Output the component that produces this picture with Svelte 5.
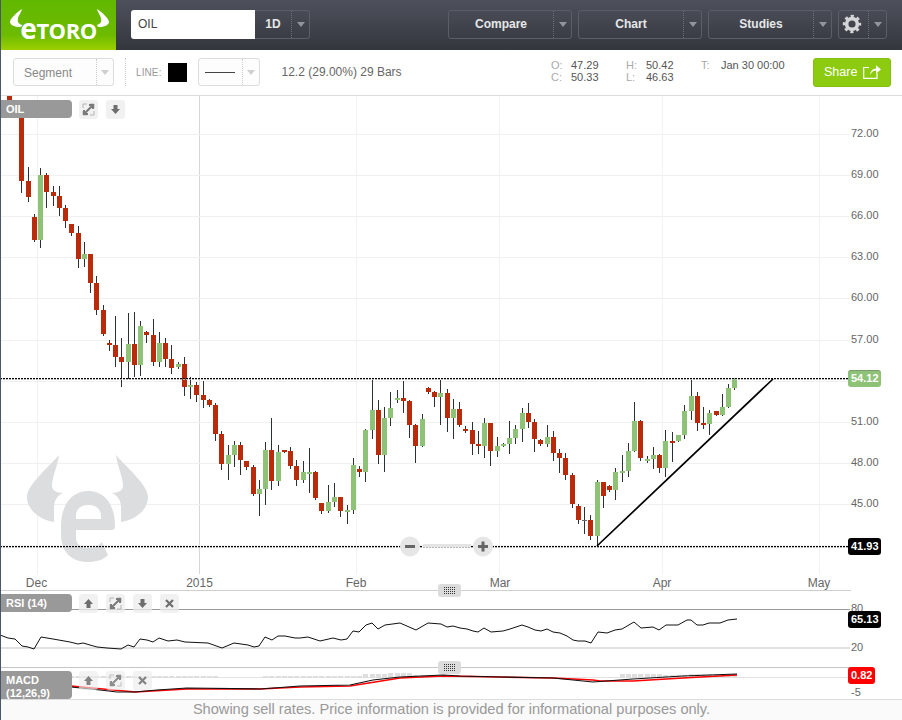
<script lang="ts">
  // [x, high, low, bodyTop, bodyBottom, kind]
  const candles: [number, number, number, number, number, string][] = [
    [9, 90, 112, 90, 112, "r"], [21, 100, 193, 100, 181, "r"], [28, 167, 202, 181, 197, "r"], [34, 214, 242, 217, 240, "r"],
    [40, 168, 248, 175, 240, "g"], [46, 173, 208, 175, 192, "r"], [53, 186, 206, 192, 196, "r"], [59, 186, 216, 196, 208, "r"],
    [65, 205, 228, 208, 221, "r"], [71, 224, 236, 224, 233, "r"], [78, 226, 268, 233, 259, "r"], [84, 242, 267, 254, 259, "g"],
    [90, 254, 293, 254, 283, "r"], [96, 276, 315, 283, 310, "r"], [103, 305, 336, 310, 334, "r"], [109, 340, 351, 343, 345, "r"],
    [115, 316, 367, 345, 357, "r"], [121, 338, 387, 357, 362, "r"], [128, 313, 379, 344, 362, "g"], [134, 312, 377, 344, 365, "r"],
    [140, 321, 376, 326, 365, "g"], [146, 331, 343, 332, 335, "r"], [153, 319, 366, 335, 362, "r"], [159, 332, 367, 343, 362, "g"],
    [165, 338, 367, 343, 359, "r"], [171, 345, 374, 359, 368, "r"], [178, 362, 369, 364, 367, "g"], [184, 357, 396, 364, 387, "r"],
    [190, 377, 399, 385, 387, "g"], [196, 382, 402, 385, 395, "r"], [203, 381, 408, 395, 400, "r"], [209, 399, 407, 400, 405, "r"],
    [215, 403, 441, 405, 434, "r"], [221, 431, 470, 434, 464, "r"], [228, 445, 480, 455, 464, "g"], [234, 441, 467, 445, 455, "g"],
    [240, 442, 475, 445, 460, "r"], [246, 461, 470, 461, 467, "r"], [253, 465, 496, 467, 494, "r"], [259, 480, 516, 489, 494, "g"],
    [265, 442, 505, 450, 489, "g"], [271, 418, 490, 450, 481, "r"], [278, 445, 486, 452, 481, "g"], [284, 450, 453, 450, 452, "r"],
    [290, 447, 469, 451, 466, "r"], [296, 460, 486, 466, 480, "r"], [303, 461, 483, 472, 480, "g"], [309, 448, 493, 472, 474, "g"],
    [315, 471, 500, 472, 498, "r"], [321, 503, 514, 503, 511, "r"], [328, 485, 513, 502, 511, "g"], [334, 483, 507, 497, 502, "g"],
    [340, 497, 517, 497, 511, "r"], [347, 505, 524, 510, 512, "g"], [353, 458, 514, 465, 510, "g"], [359, 466, 477, 469, 472, "r"],
    [365, 429, 482, 430, 472, "g"], [372, 378, 439, 410, 430, "g"], [378, 400, 464, 410, 455, "r"], [384, 407, 472, 418, 455, "g"],
    [390, 392, 426, 408, 418, "g"], [397, 390, 403, 398, 400, "g"], [403, 381, 413, 398, 401, "r"], [409, 400, 438, 401, 425, "r"],
    [415, 424, 463, 425, 446, "r"], [422, 414, 447, 419, 446, "g"], [428, 387, 394, 388, 392, "r"], [434, 391, 407, 392, 397, "r"],
    [440, 380, 425, 393, 397, "g"], [447, 389, 432, 393, 418, "r"], [453, 399, 439, 409, 418, "g"], [459, 402, 427, 409, 425, "r"],
    [465, 426, 433, 429, 431, "r"], [472, 422, 455, 430, 444, "r"], [478, 431, 454, 444, 446, "r"], [484, 418, 458, 423, 446, "g"],
    [490, 423, 466, 423, 451, "r"], [497, 437, 457, 446, 451, "g"], [503, 443, 447, 444, 446, "g"], [509, 421, 454, 438, 444, "g"],
    [515, 425, 444, 429, 438, "g"], [522, 408, 442, 413, 429, "g"], [528, 403, 428, 413, 422, "r"], [534, 419, 452, 422, 439, "r"],
    [540, 439, 446, 440, 444, "r"], [547, 425, 447, 437, 444, "g"], [553, 431, 461, 437, 453, "r"], [559, 449, 473, 453, 458, "r"],
    [565, 453, 480, 458, 475, "r"], [572, 473, 508, 475, 504, "r"], [578, 504, 524, 506, 520, "r"], [584, 507, 534, 520, 521, "n"],
    [590, 515, 540, 520, 536, "r"], [597, 480, 546, 482, 536, "g"], [603, 482, 508, 482, 496, "r"], [609, 485, 492, 486, 490, "r"],
    [615, 468, 500, 472, 490, "g"], [622, 455, 482, 471, 473, "g"], [628, 443, 477, 451, 471, "g"], [634, 402, 452, 421, 451, "g"],
    [640, 420, 461, 421, 458, "r"], [647, 456, 463, 459, 461, "g"], [653, 447, 469, 455, 459, "g"], [659, 454, 473, 455, 468, "r"],
    [665, 430, 477, 441, 468, "g"], [672, 432, 462, 441, 443, "r"], [678, 435, 442, 435, 441, "g"], [684, 405, 439, 411, 435, "g"],
    [691, 379, 420, 396, 411, "g"], [697, 392, 431, 396, 423, "r"], [703, 407, 429, 423, 425, "r"], [709, 410, 435, 413, 424, "g"],
    [716, 411, 416, 411, 415, "r"], [722, 394, 416, 407, 415, "g"], [728, 384, 408, 388, 407, "g"], [734, 378, 390, 378, 388, "g"],
  ];

  const hLines = [134, 175, 216, 257, 298, 340, 381, 422, 463, 504, 545];
  const priceLabels = [
    ["72.00", 137], ["69.00", 178], ["66.00", 219], ["63.00", 260], ["60.00", 301], ["57.00", 343],
    ["51.00", 425], ["48.00", 466], ["45.00", 507],
  ];
  const vLines = [37, 356, 499, 662, 819];
  const months = [["Dec", 36.5], ["2015", 199.5], ["Feb", 356], ["Mar", 500], ["Apr", 662], ["May", 819]];

  const rsi = "0,635 8,638 15,639 22,646 28,647 34,649 41,637 53,639 70,642 78,644 83,643 97,647 107,648 121,649 128,645 134,647 140,639 147,640 153,642 159,638 168,641 177,640 185,642 208,643 222,648 234,643 248,645 254,647 259,646 265,637 272,640 278,636 285,636 295,638 300,638 308,637 320,641 333,638 341,640 347,639 353,631 359,632 366,625 372,623 378,629 385,625 400,623 416,630 428,623 441,624 447,627 453,626 460,628 467,629 473,631 478,632 484,628 491,632 503,631 510,629 522,625 528,627 535,630 541,631 547,629 553,632 560,633 567,636 573,640 578,641 585,641 591,643 598,632 607,633 615,630 622,629 634,622 641,628 653,627 659,630 666,625 678,625 687,620 691,620 697,625 703,625 709,623 720,623 728,620 737,619";
  const macd = "0,684 71,687 100,690 117,692 135,692 157,690 187,688 260,689 287,687 300,686 350,685 373,680 400,677 443,675 460,676 500,677 553,678 593,682 633,679 683,676 737,674";
  const signal = "0,683 71,686 135,692 187,689 260,689 300,687 350,686 400,678 443,676 500,677 553,678 593,680 600,681 633,681 683,678 737,675";

  // histogram sits on the zero line, taller around the Feb bulge
  function histHeight(x: number): number {
    if (x > 217 && x < 263) return 0;
    if (x > 362 && x < 410) return x > 384 ? 4 : 3;
    if (x > 410 && x < 437) return 2;
    if (x > 437 && x < 620) return 0;
    if (x > 620) return x < 660 || x > 690 ? 3 : 2;
    return 1;
  }
  const hist = candles.filter((c) => c[0] > 70).map((c) => ({ x: c[0], h: histHeight(c[0]) })).filter((b) => b.h > 0);
</script>

<div class="page">
  <header class="topbar">
    <div class="logo">
      <svg class="horns" viewBox="0 0 115 50" aria-hidden="true">
        <path d="M21 9C15 13 9 19 9 22C9 25 14 27 19 27C20 27 21 26 21 25C18 24 16 22 17 19C17 16 20 13 21 9Z" />
        <path d="M96 9C102 13 108 19 108 22C108 25 103 27 98 27C97 27 96 26 96 25C99 24 101 22 100 19C100 16 97 13 96 9Z" />
      </svg>
      <span class="wordmark"><span class="e">e</span>TORO</span>
    </div>

    <div class="symbol">
      <span class="symbol-input">OIL</span>
      <div class="period">
        <span class="ctl-label">1D</span>
        <span class="caret-box"><i class="caret"></i></span>
      </div>
    </div>

    <div class="menus">
      {#each ["Compare", "Chart", "Studies"] as item}
        <div class="menu">
          <span class="ctl-label">{item}</span>
          <span class="caret-box"><i class="caret"></i></span>
        </div>
      {/each}
      <div class="menu gear-menu">
        <span class="ctl-label">
          <svg class="gear" viewBox="0 0 20 20" aria-hidden="true">
            <circle cx="10" cy="10" r="5.4" fill="none" stroke="#d4d5d8" stroke-width="3.6" />
            <circle cx="10" cy="10" r="7.9" fill="none" stroke="#d4d5d8" stroke-width="2.6" stroke-dasharray="3.1 3.1" stroke-dashoffset="1.5" />
          </svg>
        </span>
        <span class="caret-box"><i class="caret"></i></span>
      </div>
    </div>
  </header>

  <div class="toolbar">
    <div class="select segment">
      <span class="select-text">Segment</span>
      <span class="caret-box"><i class="caret light"></i></span>
    </div>
    <span class="sep"></span>
    <span class="line-label">LINE:</span>
    <span class="swatch"></span>
    <div class="select line-select">
      <span class="line-sample"></span>
      <span class="caret-box"><i class="caret light"></i></span>
    </div>
    <span class="measure">12.2 (29.00%) 29 Bars</span>

    <div class="ohlc">
      <span class="k">O:</span><span class="v">47.29</span>
      <span class="k">H:</span><span class="v">50.42</span>
      <span class="k">T:</span><span class="v">Jan 30 00:00</span>
      <span class="k">C:</span><span class="v">50.33</span>
      <span class="k">L:</span><span class="v">46.63</span>
    </div>

    <div class="share">
      Share
      <svg viewBox="0 0 18 14" aria-hidden="true">
        <path d="M6 2.5H0.7V13.3H14V8" fill="none" stroke="#fff" stroke-width="1.2" />
        <path d="M7 10C7.5 6 10 3.6 13 3.5V0.3L18 4.4L13 8.5V5.6C10.5 5.6 8.5 7 7 10Z" fill="#fff" />
      </svg>
    </div>
  </div>

  <section class="pane main-pane">
    <svg class="plot" viewBox="1 96 901 495">
      {#each vLines as x}
        <line x1={x + 0.5} x2={x + 0.5} y1="96" y2="574" stroke="#f2f2f2" />
      {/each}
      <line x1="199.5" x2="199.5" y1="96" y2="574" stroke="#d6d6d6" />
      {#each hLines as y}
        <line x1="0" x2="850" y1={y + 0.5} y2={y + 0.5} stroke="#f0f0f0" />
      {/each}

      <g fill="#dcddde">
        <path d="M59 455C48 468 27 485 27 497C27 510 40 520 54 522V507C54 500 58 495 63 493C56 493 52 490 52 486C52 477 58 465 59 455Z" />
        <path d="M116 455C127 468 148 485 148 497C148 510 135 520 121 522V507C121 500 117 495 112 493C119 493 123 490 123 486C123 477 117 465 116 455Z" />
        <path fill-rule="evenodd" d="M115 526C115 505 105 491 88 491C72 491 61 505 61 526V535C61 552 72 562 88 562C96 562 103 560 108 555L102 542C98 546 94 548 88 548C81 548 76 544 76 538V530H111C114 530 115 529 115 526ZM76 519V516C76 509 81 505 88 505C96 505 101 509 101 516V519Z" />
      </g>

      {#each candles as [x, hi, lo, top, bot, kind]}
        <rect x={x} y={hi} width="1" height={lo - hi} fill="#2a3033" />
        <rect class={kind} x={x - 2} y={top} width="5" height={bot - top} />
      {/each}

      {#each [378, 546] as y}
        <line x1="0" x2="848" y1={y + 1.5} y2={y + 1.5} class="dots-soft" />
        <line x1="0" x2="848" y1={y + 0.5} y2={y + 0.5} class="dots" />
      {/each}
      <line x1="597" y1="546" x2="773" y2="379" stroke="#000" stroke-width="1.7" />

      <g class="zoomer">
        <rect x="423" y="544" width="48" height="3" fill="#e4e4e4" />
        <circle cx="410" cy="546.5" r="10" fill="#e6e6e6" />
        <circle cx="483" cy="546.5" r="10" fill="#e6e6e6" />
        <rect x="405" y="545" width="10" height="3" fill="#666" />
        <rect x="478" y="545" width="10" height="3" fill="#666" />
        <rect x="481.5" y="541.5" width="3" height="10" fill="#666" />
      </g>

      {#each priceLabels as [text, y]}
        <text x="851" y={y} class="axis">{text}</text>
      {/each}
      {#each months as [text, x]}
        <text x={x} y="587" class="month">{text}</text>
      {/each}
      <line x1="0" x2="851" y1="590.5" y2="590.5" stroke="#cfcfcf" />
    </svg>

    <div class="pane-label oil">OIL</div>
    <div class="pane-tools oil-tools">
      <span class="tool"><svg viewBox="0 0 19 19"><use href="#ic-expand" /></svg></span>
      <span class="tool"><svg viewBox="0 0 19 19"><use href="#ic-down" /></svg></span>
    </div>
    <span class="tag green-tag tag-last">54.12</span>
    <span class="tag black-tag tag-low">41.93</span>
  </section>

  <section class="pane rsi-pane">
    <svg class="plot" viewBox="1 591 901 76">
      <line x1="0" x2="850" y1="609.5" y2="609.5" stroke="#999" />
      <line x1="0" x2="850" y1="648" y2="648" stroke="#e2e2e2" stroke-width="2" />
      <polyline points={rsi} fill="none" stroke="#111" />
      <text x="851" y="612" class="axis">80</text>
      <text x="851" y="651" class="axis">20</text>
    </svg>
    <div class="handle rsi-handle"></div>
    <div class="pane-label rsi-label">RSI (14)</div>
    <div class="pane-tools rsi-tools">
      <span class="tool"><svg viewBox="0 0 19 19"><use href="#ic-up" /></svg></span>
      <span class="tool"><svg viewBox="0 0 19 19"><use href="#ic-expand" /></svg></span>
      <span class="tool"><svg viewBox="0 0 19 19"><use href="#ic-down" /></svg></span>
      <span class="tool"><svg viewBox="0 0 19 19"><use href="#ic-close" /></svg></span>
    </div>
    <span class="tag black-tag tag-rsi">65.13</span>
  </section>

  <section class="pane macd-pane">
    <svg class="plot" viewBox="1 667 901 32">
      <line x1="0" x2="850" y1="667.5" y2="667.5" stroke="#c6c6c6" />
      <line x1="0" x2="850" y1="677.5" y2="677.5" stroke="#e2e2e2" />
      {#each hist as b}
        <rect x={b.x - 2} y={677 - b.h} width="5" height={b.h + 1} fill="#dedede" />
      {/each}
      <polyline points={signal} fill="none" stroke="#f00" stroke-width="1.5" />
      <polyline points={macd} fill="none" stroke="#111" stroke-width="1.2" />
      <text x="851" y="696" class="axis">-5</text>
    </svg>
    <div class="handle macd-handle"></div>
    <div class="pane-label macd-label">MACD<br />(12,26,9)</div>
    <div class="pane-tools macd-tools">
      <span class="tool"><svg viewBox="0 0 19 19"><use href="#ic-up" /></svg></span>
      <span class="tool"><svg viewBox="0 0 19 19"><use href="#ic-expand" /></svg></span>
      <span class="tool"><svg viewBox="0 0 19 19"><use href="#ic-close" /></svg></span>
    </div>
    <span class="tag red-tag tag-macd">0.82</span>
  </section>

  <footer class="disclaimer">Showing sell rates. Price information is provided for informational purposes only.</footer>

  <svg class="defs" aria-hidden="true">
    <defs>
      <g id="ic-expand">
        <path d="M4 8V4H8M11 4H15V8M15 11V15H11M8 15H4V11" fill="none" stroke="#b4b4b4" />
        <path d="M5 14L14 5M10 5H14V9M5 10V14H9" fill="none" stroke="#7a7a7a" stroke-width="2" />
      </g>
      <path id="ic-down" d="M7.5 5H11.5V9H14L9.5 14L5 9H7.5Z" fill="#6e6e6e" />
      <path id="ic-up" d="M7.5 14H11.5V10H14L9.5 5L5 10H7.5Z" fill="#6e6e6e" />
      <path id="ic-close" d="M6 6L13 13M13 6L6 13" stroke="#6e6e6e" stroke-width="2.2" fill="none" />
    </defs>
  </svg>
</div>

<style>
  :global(body) {
    margin: 0;
    background: #fff;
    overflow: hidden;
  }
  * {
    box-sizing: border-box;
  }
  .page {
    width: 902px;
    height: 720px;
    display: flex;
    flex-direction: column;
    border-left: 1px solid #48586a;
    font-family: "Liberation Sans", Arial, sans-serif;
    overflow: hidden;
    position: relative;
  }

  /* top bar */
  .topbar {
    height: 50px;
    flex: none;
    display: flex;
    align-items: center;
    background: linear-gradient(#4e515c, #34363d);
  }
  .logo {
    width: 115px;
    height: 50px;
    flex: none;
    position: relative;
    display: flex;
    align-items: center;
    justify-content: center;
    background: linear-gradient(#62b800 0, #6cbb00 70%, #9ccf00 100%);
  }
  .horns {
    position: absolute;
    left: 0;
    top: 0;
    width: 115px;
    height: 50px;
    fill: #fff;
  }
  .wordmark {
    color: #fff;
    font-family: "Open Sans", sans-serif;
    font-weight: 700;
    font-size: 22px;
    line-height: 1;
    letter-spacing: -0.5px;
    margin-top: 9px;
  }
  .wordmark .e {
    font-size: 28px;
    line-height: 0;
  }
  .symbol {
    display: flex;
    height: 29px;
    margin-left: 15px;
    margin-bottom: 1px;
  }
  .symbol-input {
    width: 124px;
    background: #fff;
    border-radius: 3px 0 0 3px;
    color: #444;
    font-size: 12px;
    line-height: 28px;
    padding-left: 7px;
  }
  .period,
  .menu {
    display: flex;
    align-items: stretch;
    border: 1px solid #5b5e68;
    color: #e6e7e9;
    font-weight: 700;
    font-size: 12px;
  }
  .period {
    width: 55px;
    border-left: none;
    border-radius: 0 3px 3px 0;
  }
  .menu {
    width: 124px;
    border-radius: 3px;
  }
  .ctl-label {
    flex: 1;
    display: flex;
    align-items: center;
    justify-content: center;
    padding-bottom: 1px;
  }
  .caret-box {
    width: 18px;
    flex: none;
    display: flex;
    align-items: center;
    justify-content: center;
    border-left: 1px dotted #6d7079;
  }
  .caret {
    display: block;
    width: 0;
    height: 0;
    border-left: 4.5px solid transparent;
    border-right: 4.5px solid transparent;
    border-top: 5px solid #92959c;
  }
  .caret.light {
    border-top-color: #cfcfcf;
  }
  .menus {
    margin-left: 138px;
    margin-bottom: 1px;
    display: flex;
    height: 29px;
    gap: 6px;
  }
  .gear-menu {
    width: 49px;
  }
  .gear-menu .ctl-label {
    padding-right: 3px;
  }
  .gear {
    width: 20px;
    height: 20px;
  }

  /* drawing toolbar */
  .toolbar {
    height: 46px;
    flex: none;
    display: flex;
    align-items: center;
    padding: 0 11px 1px 12px;
    background: #fff;
    border-bottom: 1px solid #ddd;
    position: relative;
  }
  .select {
    height: 28px;
    display: flex;
    border: 1px solid #ddd;
    border-radius: 3px;
    background: #fdfdfd;
  }
  .select .caret-box {
    border-left-color: #ccc;
    width: 17px;
  }
  .segment {
    width: 101px;
  }
  .select-text {
    flex: 1;
    font-size: 12px;
    color: #888;
    line-height: 28px;
    padding-left: 10px;
  }
  .sep {
    height: 28px;
    margin-left: 11px;
    border-left: 1px dotted #ccc;
  }
  .line-label {
    margin-left: 10px;
    font-size: 10px;
    letter-spacing: 0.1px;
    color: #999;
  }
  .swatch {
    width: 19px;
    height: 19px;
    margin-left: 6px;
    background: #000;
  }
  .line-select {
    width: 62px;
    margin-left: 11px;
  }
  .line-sample {
    flex: 1;
    position: relative;
  }
  .line-sample::after {
    content: "";
    position: absolute;
    left: 6px;
    right: 7px;
    top: 13px;
    border-top: 1px solid #444;
  }
  .measure {
    margin-left: 22px;
    font-size: 12px;
    color: #666;
  }
  .ohlc {
    position: absolute;
    left: 550px;
    top: 9px;
    display: grid;
    grid-template-columns: 20px 55px 20px 55px 20px auto;
    font-size: 11px;
    line-height: 12px;
    color: #555;
  }
  .k {
    color: #aaa;
  }
  .share {
    margin-left: auto;
    width: 78px;
    height: 29px;
    display: flex;
    align-items: center;
    justify-content: space-between;
    padding: 0 9px 1px 10px;
    background: #8ccb10;
    border: 1px solid #84c00f;
    border-radius: 3px;
    color: #fff;
    font-size: 12.5px;
  }
  .share svg {
    width: 18px;
    height: 14px;
  }

  /* chart panes */
  .pane {
    position: relative;
    flex: none;
    background: #fff;
  }
  .main-pane {
    height: 495px;
  }
  .rsi-pane {
    height: 76px;
  }
  .macd-pane {
    height: 32px;
  }
  .plot {
    display: block;
    width: 901px;
    height: 100%;
  }
  .plot .r {
    fill: #b92b0b;
  }
  .plot .g {
    fill: #8dc277;
  }
  .plot .n {
    fill: #667;
  }
  .dots {
    stroke: #000;
    stroke-dasharray: 2 1;
  }
  .dots-soft {
    stroke: #b5b5b5;
    stroke-dasharray: 2 1;
  }
  .axis {
    font-size: 11px;
    fill: #666;
  }
  .month {
    font-size: 12px;
    fill: #666;
    text-anchor: middle;
  }
  .pane-label {
    position: absolute;
    left: -1px;
    width: 72px;
    background: #999;
    color: #fff;
    font-weight: 700;
    font-size: 11px;
    border-radius: 0 4px 4px 0;
    padding-left: 6px;
  }
  .oil {
    top: 4px;
    height: 18px;
    line-height: 18px;
  }
  .rsi-label {
    top: 3px;
    height: 18px;
    line-height: 18px;
  }
  .macd-label {
    top: 4px;
    height: 28px;
    line-height: 13px;
    padding-top: 3px;
  }
  .pane-tools {
    position: absolute;
    left: 78px;
    display: flex;
    gap: 8px;
  }
  .oil-tools {
    top: 4px;
  }
  .rsi-tools {
    top: 3px;
  }
  .macd-tools {
    top: 4px;
    opacity: 0.85;
  }
  .tool {
    width: 19px;
    height: 19px;
    display: block;
    background: rgba(236, 236, 236, 0.75);
    border-radius: 3px;
  }
  .tool svg {
    display: block;
    width: 19px;
    height: 19px;
  }
  .tag {
    position: absolute;
    left: 847px;
    width: 33px;
    height: 17px;
    border-radius: 3px;
    color: #fff;
    font-weight: 700;
    font-size: 11px;
    line-height: 17px;
    padding-left: 3px;
  }
  .green-tag {
    background: #8dc277;
    border-top: 1px solid #7d9c6e;
    line-height: 15px;
  }
  .black-tag {
    background: #000;
  }
  .red-tag {
    background: #f00;
    width: 27px;
  }
  .tag-last {
    top: 274px;
  }
  .tag-low {
    top: 442px;
  }
  .tag-rsi {
    top: 20px;
  }
  .tag-macd {
    top: 0;
  }
  .handle {
    position: absolute;
    left: 437px;
    width: 23px;
    height: 13px;
    border-radius: 3px;
    padding: 3px 5px;
    background:
      conic-gradient(#333 25%, transparent 0) 0 0 / 2px 2px content-box,
      #dcdcdc;
    z-index: 2;
  }
  .rsi-handle {
    top: -7px;
  }
  .macd-handle {
    top: -6px;
  }
  .disclaimer {
    flex: none;
    height: 21px;
    background: #fafafa;
    border-top: 1px solid #ddd;
    color: #999;
    font-size: 14.6px;
    line-height: 19px;
    text-align: center;
  }
  .defs {
    position: absolute;
    width: 0;
    height: 0;
  }
</style>
